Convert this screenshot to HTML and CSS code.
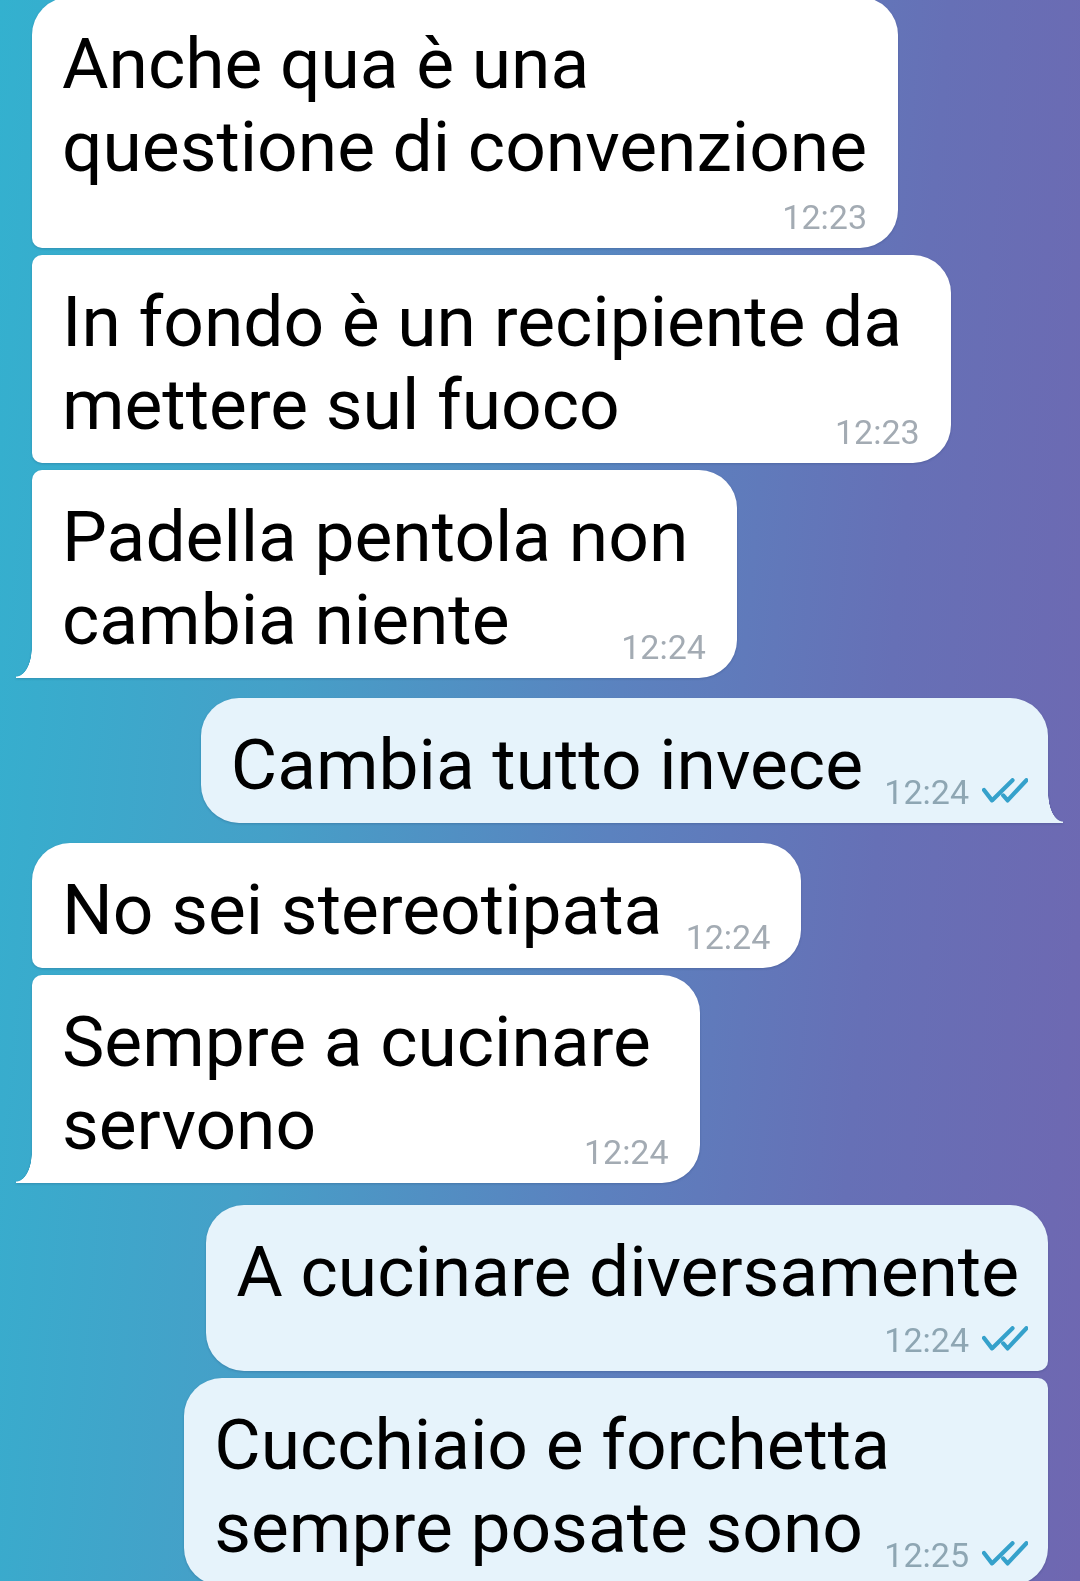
FILE: index.html
```html
<!DOCTYPE html>
<html lang="it">
<head>
<meta charset="utf-8">
<title>Chat</title>
<link rel="stylesheet" href="styles.css">
</head>
<body>
<main class="chat">
  <div class="bubble in first">
    <p class="text">Anche qua è una<br>questione di convenzione</p>
    <div class="meta below"><time>12:23</time></div>
  </div>
  <div class="bubble in mid">
    <p class="text">In fondo è un recipiente da&nbsp;<br>mettere sul fuoco<span class="spacer"></span></p>
    <div class="meta"><time>12:23</time></div>
  </div>
  <div class="bubble in last">
    <p class="text">Padella pentola non&nbsp;<br>cambia niente<span class="spacer"></span></p>
    <div class="meta"><time>12:24</time></div>
  </div>

  <div class="bubble out single">
    <p class="text">Cambia tutto invece<span class="spacer"></span></p>
    <div class="meta"><time>12:24</time><svg class="checks" viewBox="0 0 46 25" width="46" height="25"><path d="M2 12 L10 22.4 L30.5 2.2"/><path d="M21.2 17.4 L25.6 22.4 L44.4 2.2"/></svg></div>
  </div>

  <div class="bubble in first group">
    <p class="text">No sei stereotipata<span class="spacer"></span></p>
    <div class="meta"><time>12:24</time></div>
  </div>
  <div class="bubble in last">
    <p class="text">Sempre a cucinare&nbsp;<br>servono<span class="spacer"></span></p>
    <div class="meta"><time>12:24</time></div>
  </div>

  <div class="bubble out first group">
    <p class="text">A cucinare diversamente</p>
    <div class="meta below"><time>12:24</time><svg class="checks" viewBox="0 0 46 25" width="46" height="25"><path d="M2 12 L10 22.4 L30.5 2.2"/><path d="M21.2 17.4 L25.6 22.4 L44.4 2.2"/></svg></div>
  </div>
  <div class="bubble out last-cut">
    <p class="text">Cucchiaio e forchetta<br>sempre posate sono<span class="spacer"></span></p>
    <div class="meta"><time>12:25</time><svg class="checks" viewBox="0 0 46 25" width="46" height="25"><path d="M2 12 L10 22.4 L30.5 2.2"/><path d="M21.2 17.4 L25.6 22.4 L44.4 2.2"/></svg></div>
  </div>
</main>
</body>
</html>
```

FILE: styles.css
```css
html {
  min-height: 100%;
  background: linear-gradient(95deg, #33b1cf 0%, #45a0c8 28%, #5b82bf 56%, #6670b6 78%, #6f67b1 100%);
}

body {
  margin: 0;
  height: 1581px;
  overflow: hidden;
  font-family: Roboto, "Noto Sans", "Liberation Sans", sans-serif;
  color: #000;
}

.chat {
  display: flex;
  flex-direction: column;
  margin-top: -3px;
}

.bubble {
  position: relative;
  padding: 25px 31px 14px 30px;
  border-radius: 38px;
  filter: drop-shadow(0 1.5px 0.8px rgba(20, 40, 80, 0.22));
  margin-top: 7px;
}

.bubble:first-child {
  margin-top: 0;
}

.bubble.group,
.bubble.single {
  margin-top: 20px;
}

.out.first.group {
  margin-top: 22px;
}

.in {
  align-self: flex-start;
  margin-left: 32px;
  background: #ffffff;
}

.in.first:first-child .meta.below {
  margin-top: 12px;
}

.out {
  align-self: flex-end;
  margin-right: 32px;
  padding-right: 29px;
  background: #e6f3fb;
}

/* incoming grouping radii */
.in.first { border-bottom-left-radius: 10px; }
.in.mid { border-top-left-radius: 10px; border-bottom-left-radius: 10px; }
.in.last { border-top-left-radius: 10px; border-bottom-left-radius: 0; }

.in.last::before {
  content: "";
  position: absolute;
  left: -16px;
  bottom: 0;
  width: 16px;
  height: 30px;
  background: radial-gradient(16px 29px at 0 0, rgba(255,255,255,0) 97%, #ffffff 100%);
}

/* outgoing grouping radii */
.out.single { border-bottom-right-radius: 0; }
.out.first { border-bottom-right-radius: 10px; }
.out.last-cut { border-top-right-radius: 10px; }

.out.single::after {
  content: "";
  position: absolute;
  right: -15px;
  bottom: 0;
  width: 15px;
  height: 30px;
  background: radial-gradient(15px 29px at 100% 0, rgba(230,243,251,0) 97%, #e6f3fb 100%);
}

.text {
  margin: 0;
  font-size: 71.3px;
  line-height: 83px;
  white-space: nowrap;
}

.spacer {
  display: inline-block;
  width: 108px;
  height: 1px;
}

.out .spacer {
  width: 156px;
}

.meta {
  display: flex;
  justify-content: flex-end;
  align-items: flex-start;
  height: 34px;
  margin-top: -31px;
  font-size: 34px;
  line-height: 34px;
  color: #a3abb3;
}

.meta.below {
  margin-top: 10px;
}

.out .meta {
  color: #8ea6b3;
  margin-right: -9px;
}

.checks {
  margin-left: 13px;
  margin-top: 3px;
  fill: none;
  stroke: #35a1cb;
  stroke-width: 4.2;
  stroke-linecap: round;
  stroke-linejoin: round;
}
```
